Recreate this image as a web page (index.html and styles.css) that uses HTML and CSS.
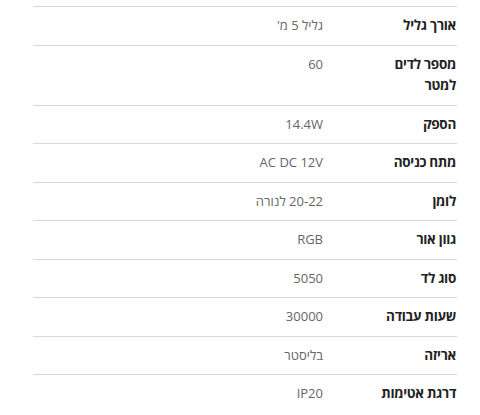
FILE: index.html
```html
<!DOCTYPE html>
<html lang="he" dir="rtl">
<head>
<meta charset="utf-8">
<link rel="stylesheet" href="styles.css">
</head>
<body>
<div class="specs">
  <div class="row"><div class="label">אורך גליל</div><div class="value">גליל 5 מ'</div></div>
  <div class="row"><div class="label">מספר לדים למטר</div><div class="value">60</div></div>
  <div class="row"><div class="label">הספק</div><div class="value">14.4W</div></div>
  <div class="row"><div class="label">מתח כניסה</div><div class="value">AC DC 12V</div></div>
  <div class="row"><div class="label">לומן</div><div class="value">20-22 לנורה</div></div>
  <div class="row"><div class="label">גוון אור</div><div class="value">RGB</div></div>
  <div class="row"><div class="label">סוג לד</div><div class="value">5050</div></div>
  <div class="row"><div class="label">שעות עבודה</div><div class="value">30000</div></div>
  <div class="row"><div class="label">אריזה</div><div class="value">בליסטר</div></div>
  <div class="row last"><div class="label">דרגת אטימות</div><div class="value">IP20</div></div>
</div>
</body>
</html>
```

FILE: styles.css
```css
html, body {
  margin: 0;
  padding: 0;
  background: #fff;
}
body {
  font-family: "Open Sans", "Noto Sans", "DejaVu Sans", sans-serif;
  font-size: 13px;
  line-height: 21.5px;
  direction: rtl;
}
.specs {
  width: 424px;
  margin: 6px 23px 0 33px;
  border-top: 1px solid #d8d8d8;
}
.row {
  display: grid;
  grid-template-columns: 134px 1fr;
  padding: 8px 0;
  border-bottom: 1px solid #d8d8d8;
}
.row.last {
  border-bottom: none;
}
.label {
  font-weight: 700;
  font-size: 13.5px;
  letter-spacing: -0.3px;
  color: #222;
  padding-right: 1px;
  padding-left: 44px;
}
.value {
  color: #666;
}
```
